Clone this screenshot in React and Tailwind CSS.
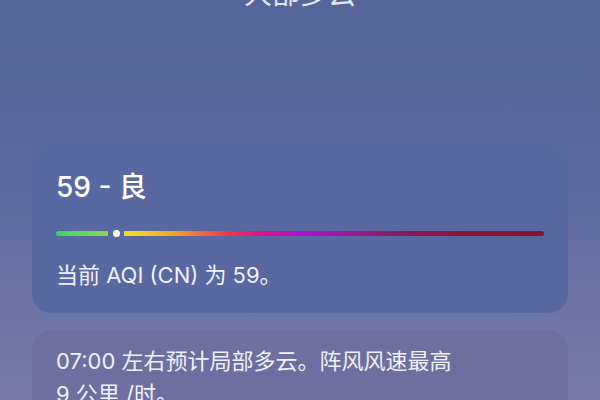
const App = () => {
  return (
    <div
      className="w-[600px] h-[400px] overflow-hidden bg-gradient-to-b from-[#55669a] via-[#5d6ca2] to-[#7a7aa8] text-white"
      style={{ fontFamily: 'Inter, "Noto Sans CJK SC", sans-serif' }}
    >
      <div className="text-center text-[28px] leading-[34px] mt-[-23px] text-[#e3e7f5]">
        大部多云
      </div>

      <div className="mx-[32px] mt-[133px] h-[169px] rounded-[20px] bg-[#5868a0] px-6 pt-[26px]">
        <div className="text-[28px] leading-[34px] font-medium">59 - 良</div>
        <div className="mt-[25px] flex items-center h-[8px]">
          <div className="w-[52px] h-[5px] rounded-l-full bg-gradient-to-r from-[#2fd568] to-[#86d950]" />
          <div className="ml-[5px] w-[7px] h-[7px] rounded-full bg-white" />
          <div className="ml-[4px] flex-1 h-[5px] rounded-r-full bg-[linear-gradient(to_right,#f4dc2a_0%,#f5a524_12%,#ef3b4a_24%,#e0147c_32%,#b60fd8_42%,#9a1aa8_52%,#871b5a_64%,#8a1537_80%,#84142f_100%)]" />
        </div>
        <div className="mt-[23px] text-[22px] leading-[30px] text-[#f0f1f8]">当前 AQI (CN) 为 59。</div>
      </div>

      <div className="mx-[32px] mt-[17px] h-[120px] rounded-[20px] bg-[#6e6fa0] px-6 pt-[15px]">
        <div className="text-[22px] leading-[33px] text-[#f0f1f8]">
          07:00 左右预计局部多云。阵风风速最高
          <br />9 公里 /时。
        </div>
      </div>
    </div>
  );
};

export default App;
